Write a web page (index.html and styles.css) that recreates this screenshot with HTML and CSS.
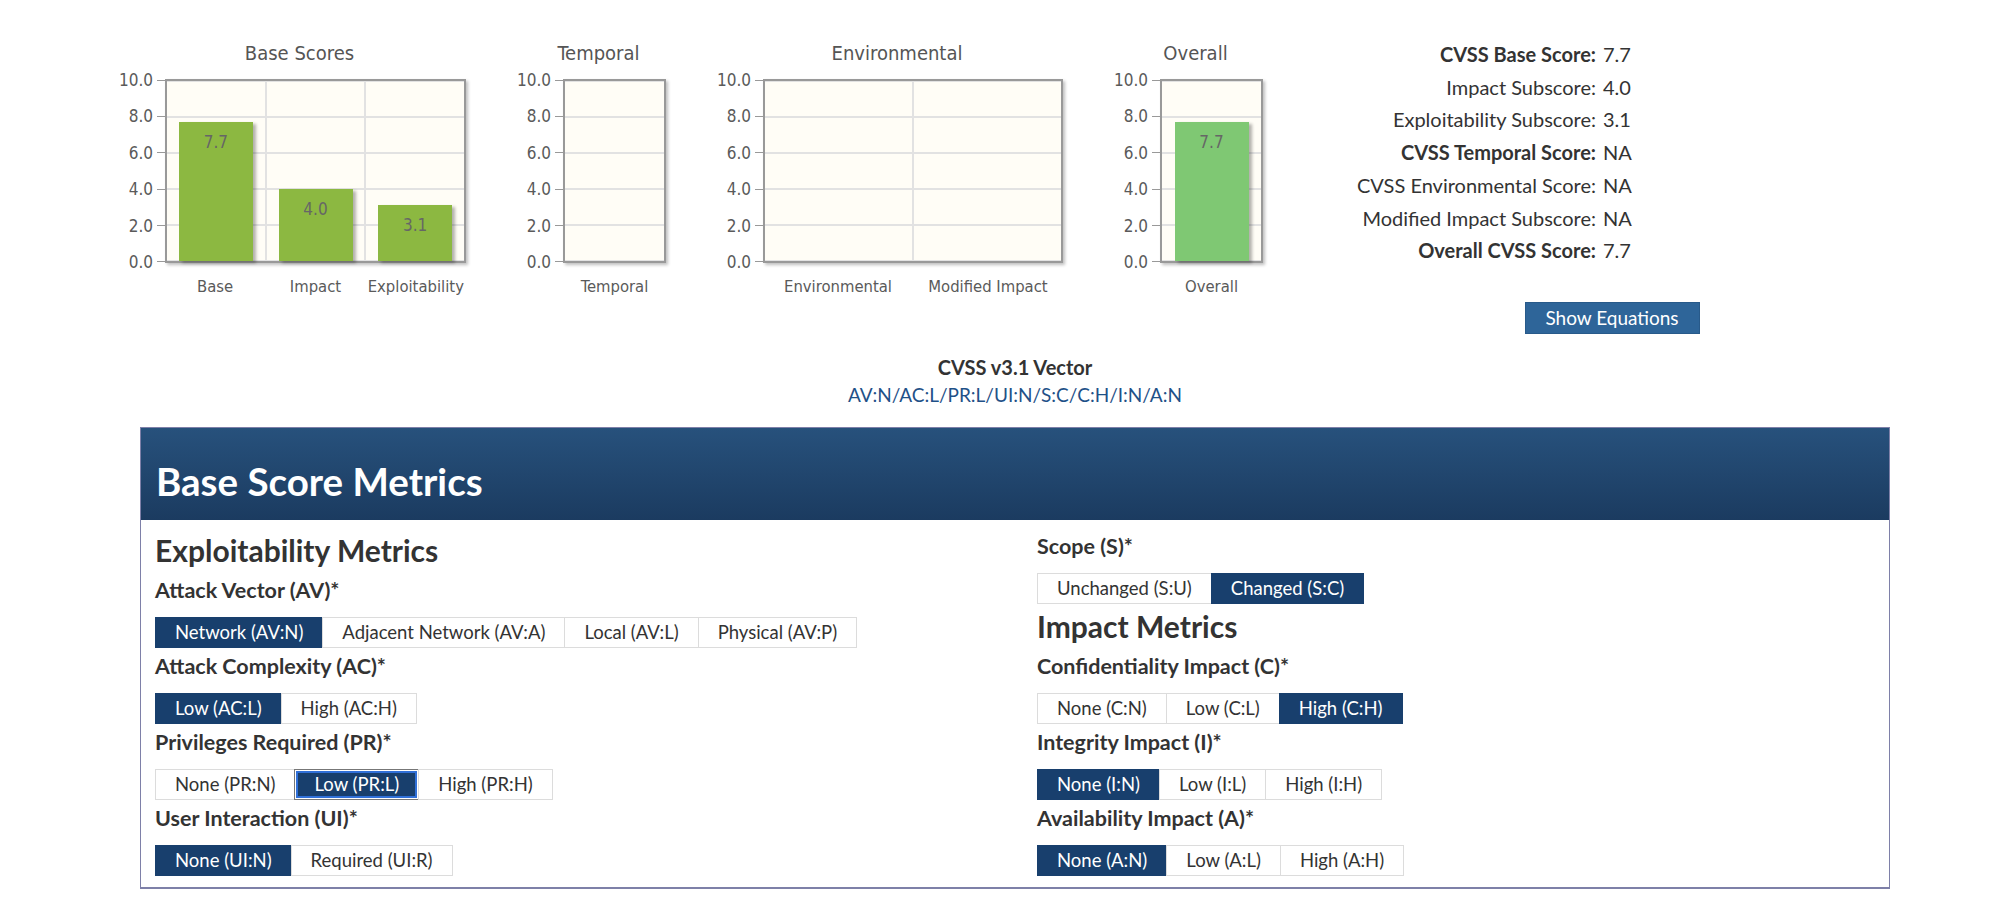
FILE: index.html
```html
<!DOCTYPE html>
<html lang="en">

<head>
    <meta charset="UTF-8">
    <title>CVSS v3.1 Calculator</title>
    <link rel="stylesheet" href="styles.css">
</head>

<body>
    <section class="summary">
        <div class="chart">
            <div class="chart-title">Base Scores</div>
            <div class="y-axis"><span>10.0</span><span>8.0</span><span>6.0</span><span>4.0</span><span>2.0</span><span>0.0</span></div>
            <div class="plot w3">
                <div class="cat"><div class="bar" style="height: 77%">7.7</div></div>
                <div class="cat"><div class="bar" style="height: 40%">4.0</div></div>
                <div class="cat"><div class="bar" style="height: 31%">3.1</div></div>
            </div>
            <div class="x-axis"><span>Base</span><span>Impact</span><span>Exploitability</span></div>
        </div>

        <div class="chart">
            <div class="chart-title">Temporal</div>
            <div class="y-axis"><span>10.0</span><span>8.0</span><span>6.0</span><span>4.0</span><span>2.0</span><span>0.0</span></div>
            <div class="plot w1">
                <div class="cat"></div>
            </div>
            <div class="x-axis"><span>Temporal</span></div>
        </div>

        <div class="chart">
            <div class="chart-title">Environmental</div>
            <div class="y-axis"><span>10.0</span><span>8.0</span><span>6.0</span><span>4.0</span><span>2.0</span><span>0.0</span></div>
            <div class="plot w2">
                <div class="cat"></div>
                <div class="cat"></div>
            </div>
            <div class="x-axis"><span>Environmental</span><span>Modified Impact</span></div>
        </div>

        <div class="chart">
            <div class="chart-title">Overall</div>
            <div class="y-axis"><span>10.0</span><span>8.0</span><span>6.0</span><span>4.0</span><span>2.0</span><span>0.0</span></div>
            <div class="plot w1">
                <div class="cat"><div class="bar overall" style="height: 77%">7.7</div></div>
            </div>
            <div class="x-axis"><span>Overall</span></div>
        </div>

        <div class="scores">
            <dl class="score-list">
                <dt class="strong">CVSS Base Score:</dt><dd>7.7</dd>
                <dt>Impact Subscore:</dt><dd>4.0</dd>
                <dt>Exploitability Subscore:</dt><dd>3.1</dd>
                <dt class="strong">CVSS Temporal Score:</dt><dd>NA</dd>
                <dt>CVSS Environmental Score:</dt><dd>NA</dd>
                <dt>Modified Impact Subscore:</dt><dd>NA</dd>
                <dt class="strong">Overall CVSS Score:</dt><dd>7.7</dd>
            </dl>
            <button type="button" class="btn-eq">Show Equations</button>
        </div>
    </section>

    <div class="vector">
        <div class="vector-title">CVSS v3.1 Vector</div>
        <a href="#" class="vector-link">AV:N/AC:L/PR:L/UI:N/S:C/C:H/I:N/A:N</a>
    </div>

    <div class="panel">
        <div class="panel-head">
            <h2>Base Score Metrics</h2>
        </div>
        <div class="panel-body">
            <div class="col">
                <h3>Exploitability Metrics</h3>
                <div class="metric">
                    <div class="metric-label">Attack Vector (AV)*</div>
                    <div class="options">
                        <button type="button" class="opt on">Network (AV:N)</button>
                        <button type="button" class="opt">Adjacent Network (AV:A)</button>
                        <button type="button" class="opt">Local (AV:L)</button>
                        <button type="button" class="opt">Physical (AV:P)</button>
                    </div>
                </div>
                <div class="metric">
                    <div class="metric-label">Attack Complexity (AC)*</div>
                    <div class="options">
                        <button type="button" class="opt on">Low (AC:L)</button>
                        <button type="button" class="opt">High (AC:H)</button>
                    </div>
                </div>
                <div class="metric">
                    <div class="metric-label">Privileges Required (PR)*</div>
                    <div class="options">
                        <button type="button" class="opt">None (PR:N)</button>
                        <button type="button" class="opt on focus">Low (PR:L)</button>
                        <button type="button" class="opt">High (PR:H)</button>
                    </div>
                </div>
                <div class="metric">
                    <div class="metric-label">User Interaction (UI)*</div>
                    <div class="options">
                        <button type="button" class="opt on">None (UI:N)</button>
                        <button type="button" class="opt">Required (UI:R)</button>
                    </div>
                </div>
            </div>

            <div class="col">
                <div class="metric">
                    <div class="metric-label">Scope (S)*</div>
                    <div class="options">
                        <button type="button" class="opt">Unchanged (S:U)</button>
                        <button type="button" class="opt on">Changed (S:C)</button>
                    </div>
                </div>
                <h3>Impact Metrics</h3>
                <div class="metric">
                    <div class="metric-label">Confidentiality Impact (C)*</div>
                    <div class="options">
                        <button type="button" class="opt">None (C:N)</button>
                        <button type="button" class="opt">Low (C:L)</button>
                        <button type="button" class="opt on">High (C:H)</button>
                    </div>
                </div>
                <div class="metric">
                    <div class="metric-label">Integrity Impact (I)*</div>
                    <div class="options">
                        <button type="button" class="opt on">None (I:N)</button>
                        <button type="button" class="opt">Low (I:L)</button>
                        <button type="button" class="opt">High (I:H)</button>
                    </div>
                </div>
                <div class="metric">
                    <div class="metric-label">Availability Impact (A)*</div>
                    <div class="options">
                        <button type="button" class="opt on">None (A:N)</button>
                        <button type="button" class="opt">Low (A:L)</button>
                        <button type="button" class="opt">High (A:H)</button>
                    </div>
                </div>
            </div>
        </div>
    </div>
</body>

</html>
```

FILE: styles.css
```css
/* Reset */
*,
*::after,
*::before {
    box-sizing: border-box;
}

body {
    margin: 0;
    background-color: #fff;
    color: #333;
    font-family: Lato, "Noto Sans", sans-serif;
}

/* Charts + scores row */
.summary {
    display: flex;
    align-items: flex-start;
    gap: 45px;
    padding: 38px 0 0 113px;
}

.chart {
    display: grid;
    grid-template-columns: 52px auto;
    color: #5a5a5a;
    font-family: "DejaVu Sans Condensed", "DejaVu Sans", sans-serif;
    font-stretch: condensed;
}

.chart-title {
    grid-column: 1 / 3;
    text-align: center;
    padding-left: 20px;
    margin: 1px 0 12px;
    font-size: 20px;
    line-height: 28px;
    color: #555;
}

.y-axis {
    display: flex;
    flex-direction: column;
    justify-content: space-between;
    margin: -9px 0;
    font-size: 17px;
    line-height: 20px;
}

.y-axis span {
    display: flex;
    justify-content: flex-end;
    align-items: center;
    gap: 4px;
}

.y-axis span::after {
    content: "";
    width: 8px;
    height: 1px;
    background-color: #999;
}

.plot {
    display: flex;
    height: 184px;
    border: 2px solid #999;
    background-color: #fffdf6;
    background-image: linear-gradient(#e2e2e2 2px, transparent 2px);
    background-size: 100% 36px;
    background-position: 0 -1px;
    box-shadow: 2px 2px 3px rgba(0, 0, 0, 0.25);
}

.plot.w1 {
    width: 103px;
}

.plot.w2 {
    width: 300px;
}

.plot.w3 {
    width: 301px;
}

.cat {
    flex: 1;
    display: flex;
    align-items: flex-end;
    justify-content: center;
}

.cat + .cat {
    border-left: 2px solid #e2e2e2;
}

.bar {
    width: 74px;
    padding-top: 10px;
    background-color: #8cb841;
    box-shadow: 3px 2px 3px rgba(0, 0, 0, 0.3);
    text-align: center;
    font-size: 17px;
    line-height: 20px;
    color: #666;
}

.bar.overall {
    background-color: #7fc873;
}

.x-axis {
    grid-column: 2;
    display: flex;
    margin-top: 14px;
    font-size: 16.5px;
    line-height: 20px;
}

.x-axis span {
    flex: 1;
    text-align: center;
    white-space: nowrap;
}

.scores {
    width: 608px;
}

.score-list {
    display: grid;
    grid-template-columns: 288px auto;
    column-gap: 7px;
    margin: 0;
    font-size: 20px;
    line-height: 32.7px;
}

.score-list dt {
    text-align: right;
}

.score-list dt.strong {
    font-weight: 700;
}

.score-list dd {
    margin: 0;
}

.btn-eq {
    display: block;
    width: 175px;
    height: 32px;
    margin: 35px auto 0;
    border: 1px solid #285a8a;
    background-color: #2e6599;
    color: #fff;
    font-family: inherit;
    font-size: 19px;
}

/* Vector string */
.vector {
    width: 1750px;
    margin: 19px 0 0 140px;
    text-align: center;
    font-size: 19px;
    line-height: 28px;
}

.vector-title {
    font-size: 20px;
    font-weight: 700;
}

.vector-link {
    color: #1f5188;
    text-decoration: none;
}

/* Metrics panel */
.panel {
    width: 1750px;
    margin: 18px 0 0 140px;
    border: 1px solid #7e80a8;
    border-bottom-width: 2px;
}

.panel-head {
    padding: 33px 15px 18px;
    background: linear-gradient(#27517c, #1b3b60);
}

.panel-head h2 {
    margin: 0;
    color: #fff;
    font-size: 38.5px;
    line-height: 41px;
    font-weight: 700;
}

.panel-body {
    display: grid;
    grid-template-columns: 1fr 1fr;
    column-gap: 44px;
    padding: 12px 14px 11px;
}

.col h3 {
    margin: 4px 0 0;
    font-size: 30px;
    line-height: 36px;
    font-weight: 700;
}

.metric {
    margin-top: 4px;
}

.col h3 + .metric {
    margin-top: 8px;
}

.col > :first-child {
    margin-top: 0;
}

.metric-label {
    font-size: 21.5px;
    line-height: 28px;
    font-weight: 700;
}

.options {
    display: flex;
    margin-top: 13px;
}

.opt {
    height: 31px;
    padding: 0 19px;
    border: 1px solid #dcdcdc;
    background-color: #fff;
    color: #333;
    font-family: inherit;
    font-size: 18.5px;
}

.opt + .opt {
    margin-left: -1px;
}

.opt.on {
    border-color: #183f6d;
    background-color: #183f6d;
    color: #fff;
}

.opt.focus {
    border-color: #777;
    box-shadow: inset 0 0 0 1px #fff, inset 0 0 0 3px #3070d8;
}
```
